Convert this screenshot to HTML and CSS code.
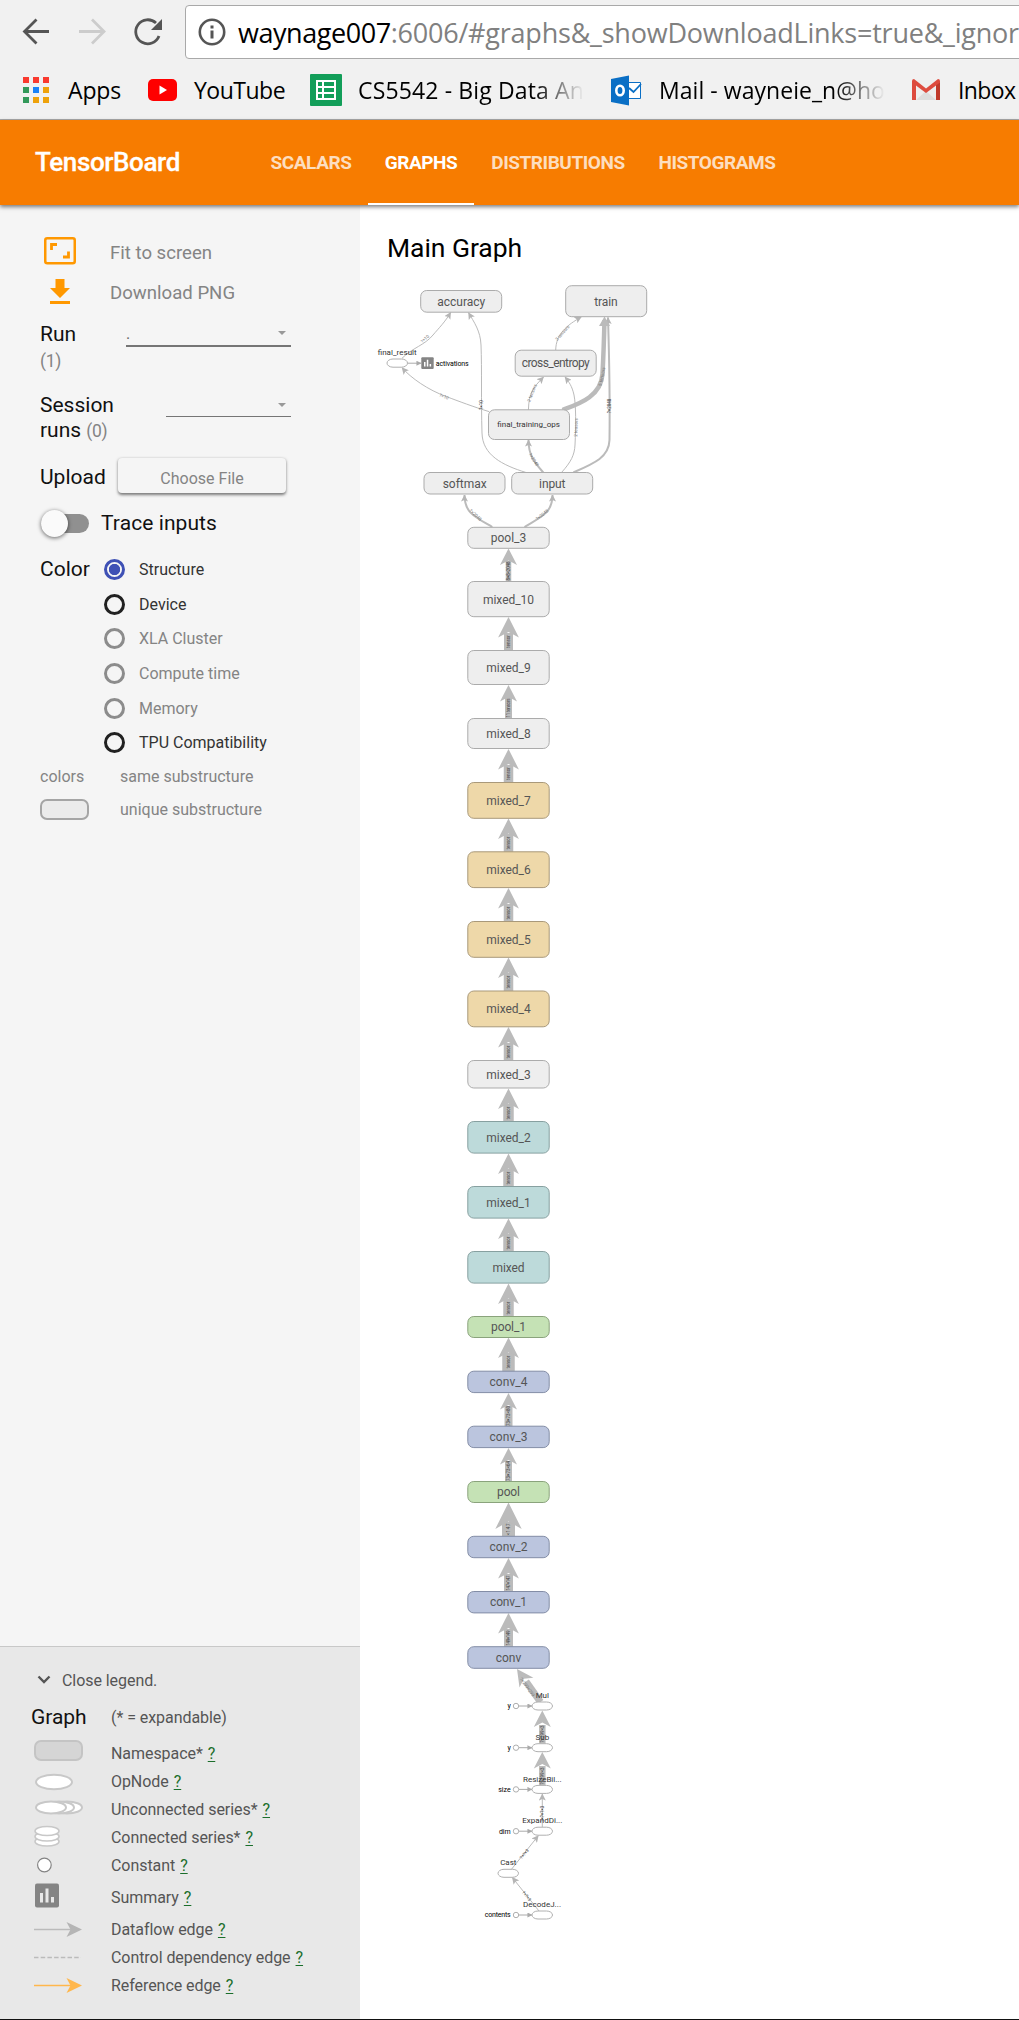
FILE: index.html
```html
<!DOCTYPE html>
<html lang="en">
<head>
<meta charset="utf-8">
<title>TensorBoard</title>
<link rel="stylesheet" href="styles.css">
</head>
<body>
<header class="browser">
  <div class="toolbar">
    <svg class="nav-icons" width="185" height="64" viewBox="0 0 185 64" fill="none" stroke-width="2.8">
      <path d="M49 31.500H25M36.500 19.500L24.500 31.500L36.500 43.500" stroke="#555"/>
      <path d="M79 31.500H103M92 19.500L104 31.500L92 43.500" stroke="#ccc"/>
      <path d="M159 36A12 12 0 1 1 156 23" stroke="#555"/>
      <path d="M162 19V30H151Z" fill="#555"/>
    </svg>
    <div class="omnibox">
      <svg width="28" height="28" viewBox="0 0 28 28"><circle cx="14" cy="14" r="12.200" fill="none" stroke="#555" stroke-width="2.600"/><path d="M12.500 7.500h3v3h-3zM12.500 12.500h3v8h-3z" fill="#555"/></svg>
      <span class="url"><span class="host">waynage007</span><span class="rest">:6006/#graphs&amp;_showDownloadLinks=true&amp;_ignor</span></span>
    </div>
  </div>
  <nav class="bookmarks">
    <a class="bm bm-apps"><svg width="26" height="26" viewBox="0 0 26 26"><path d="M0 0h6v6H0zM10 0h6v6h-6zM20 0h6v6h-6z" fill="#f93a2f"/><path d="M0 10h6v6H0zM0 20h6v6H0z" fill="#33995a"/><path d="M10 10h6v6h-6z" fill="#1a82f7"/><path d="M20 10h6v6h-6zM10 20h6v6h-6zM20 20h6v6h-6z" fill="#eea20b"/></svg><span>Apps</span></a>
    <a class="bm bm-yt"><svg width="29" height="22" viewBox="0 0 29 22"><rect width="29" height="22" rx="5" fill="#f00"/><path d="M11.500 6.500V15.500L19 11Z" fill="#fff"/></svg><span>YouTube</span></a>
    <a class="bm bm-cs"><svg width="32" height="32" viewBox="0 0 32 32"><rect width="32" height="32" rx="1" fill="#129e59"/><path d="M6 6h20v20H6z" fill="#fff"/><path d="M8 8h4v4H8zM14 8h10v4H14zM8 14h4v4H8zM14 14h10v4H14zM8 20h4v4H8zM14 20h10v4H14z" fill="#129e59"/></svg><span class="fade">CS5542 - Big Data An</span></a>
    <a class="bm bm-mail"><svg width="31" height="31" viewBox="0 0 31 31"><path d="M17 7.500H29.500V23.500H17" fill="#fff" stroke="#0a6fc5"/><path d="M18 13l4.500 4L30 9" fill="none" stroke="#0a6fc5" stroke-width="1.800"/><path d="M0 4L18 0.500V30.500L0 27Z" fill="#0a6fc5"/><ellipse cx="9" cy="15.500" rx="3.700" ry="4.800" fill="none" stroke="#fff" stroke-width="2.600"/></svg><span class="fade">Mail - wayneie_n@ho</span></a>
    <a class="bm bm-gm"><svg width="28" height="22" viewBox="0 0 28 22"><path d="M2 1H26V21H2Z" fill="#eee"/><path d="M4 21L14 12L24 21Z" fill="#ddd"/><path d="M0 21V2Q0 0 2 0L14 9.500L26 0Q28 0 28 2V21H24V6.500L14 14L4 6.500V21Z" fill="#dd4b3e"/><path d="M24 6.500L28 3.500V21H24Z" fill="#c03a2b"/></svg><span>Inbox</span></a>
  </nav>
</header>
<div class="appbar">
  <h1>TensorBoard</h1>
  <nav class="tabs"><a class="t-scalars">SCALARS</a><a class="t-graphs active">GRAPHS</a><a class="t-dist">DISTRIBUTIONS</a><a class="t-hist">HISTOGRAMS</a></nav>
</div>
<div class="main">
  <aside class="sidebar">
    <div class="action"><svg width="32" height="28" viewBox="0 0 32 28" fill="none" stroke="#ff9800"><rect x="1.250" y="1.250" width="29.500" height="25" rx="2" stroke-width="2.500"/><path d="M7.500 13V7.500H13M24.500 14.500V20H19" stroke-width="2.800"/></svg><span>Fit to screen</span></div>
    <div class="action"><svg width="32" height="28" viewBox="0 0 32 28" fill="#ff9800"><path d="M11.500 2H20.500V11H26L16 21L6 11H11.500ZM6 24H26V27H6Z"/></svg><span>Download PNG</span></div>
    <div class="field run"><div class="label">Run<br><small>(1)</small></div><div class="select sel-run"><span>.</span><i></i></div></div>
    <div class="field session"><div class="label">Session<br>runs <small>(0)</small></div><div class="select sel-session"><span></span><i></i></div></div>
    <div class="upload"><span class="label">Upload</span><button>Choose File</button></div>
    <div class="trace"><div class="toggle"></div><span class="label">Trace inputs</span></div>
    <div class="color"><span class="label">Color</span>
      <ul>
        <li class="on"><b></b><span>Structure</span></li>
        <li><b></b><span>Device</span></li>
        <li class="off"><b></b><span>XLA Cluster</span></li>
        <li class="off"><b></b><span>Compute time</span></li>
        <li class="off"><b></b><span>Memory</span></li>
        <li><b></b><span>TPU Compatibility</span></li>
      </ul>
    </div>
    <div class="subst"><div>colors</div><span>same substructure</span></div>
    <div class="subst second"><div><i></i></div><span>unique substructure</span></div>
    <section class="legend">
      <div class="close"><svg width="14" height="10" viewBox="0 0 14 10"><path d="M1.500 1.500L7 7L12.500 1.500" fill="none" stroke="#555" stroke-width="2.400"/></svg><span>Close legend.</span></div>
      <div class="head"><strong>Graph</strong><span>(* = expandable)</span></div>
      <div class="item ns"><svg width="50" height="28" viewBox="0 0 50 28"><rect x="1" y="2" width="47" height="19" rx="6" fill="#d5d5d5" stroke="#c4c4c4" stroke-width="2"/></svg><span>Namespace*</span><a>?</a></div>
      <div class="item"><svg width="50" height="28" viewBox="0 0 50 28"><ellipse cx="20" cy="15" rx="18" ry="7.200" fill="#fff" stroke="#c8c8c8" stroke-width="2"/></svg><span>OpNode</span><a>?</a></div>
      <div class="item"><svg width="50" height="28" viewBox="0 0 50 28" fill="#fff" stroke="#c8c8c8" stroke-width="2"><ellipse cx="33" cy="12.500" rx="15" ry="6"/><ellipse cx="25" cy="12.500" rx="15" ry="6"/><ellipse cx="17" cy="12.500" rx="15" ry="6"/></svg><span>Unconnected series*</span><a>?</a></div>
      <div class="item"><svg width="50" height="28" viewBox="0 0 50 28" fill="#fff" stroke="#c8c8c8" stroke-width="1.500"><ellipse cx="13" cy="18.500" rx="12" ry="4.600"/><ellipse cx="13" cy="13.500" rx="12" ry="4.600"/><ellipse cx="13" cy="8" rx="12" ry="4.600"/></svg><span>Connected series*</span><a>?</a></div>
      <div class="item"><svg width="50" height="28" viewBox="0 0 50 28"><circle cx="10.400" cy="14" r="6.800" fill="#fff" stroke="#848484" stroke-width="1.200"/></svg><span>Constant</span><a>?</a></div>
      <div class="item sum"><svg width="50" height="28" viewBox="0 0 50 28"><rect x="1" y="0.500" width="24" height="24" rx="2" fill="#848484"/><path d="M6 10h3v9.500H6zM11.500 5.500h3v14h-3zM17 14h3v5.500h-3z" fill="#e8e8e8"/></svg><span>Summary</span><a>?</a></div>
      <div class="item"><svg width="50" height="28" viewBox="0 0 50 28"><path d="M0 14.500H40" stroke="#bbb" stroke-width="1.400"/><path d="M48 14.500L32.500 7L36.500 14.500L32.500 22Z" fill="#b5b5b5"/></svg><span>Dataflow edge</span><a>?</a></div>
      <div class="item"><svg width="50" height="28" viewBox="0 0 50 28"><path d="M0 14.500H47" stroke="#bbb" stroke-width="1.400" stroke-dasharray="4.500 2.200"/></svg><span>Control dependency edge</span><a>?</a></div>
      <div class="item"><svg width="50" height="28" viewBox="0 0 50 28"><path d="M0 14.500H40" stroke="#ffb74d" stroke-width="1.600"/><path d="M48 14.500L32.500 7L36.500 14.500L32.500 22Z" fill="#ffb74d"/></svg><span>Reference edge</span><a>?</a></div>
    </section>
  </aside>
  <main class="canvas">
    <h2>Main Graph</h2>
    <svg class="graph" width="659" height="1739" viewBox="360 280 659 1739">
      <defs>
        <g id="head-s"><path d="M0 0L8.500 16.500L0 12L-8.500 16.500Z"/></g>
        <g id="head-m"><path d="M0 0L10.400 20.500L0 15L-10.400 20.500Z"/></g>
        <g id="head-l"><path d="M0 0L13.200 26.500L0 19L-13.200 26.500Z"/></g>
        <marker id="tip" viewBox="0 0 7 7" refX="6.500" refY="3.500" markerWidth="7" markerHeight="7" markerUnits="userSpaceOnUse" orient="auto"><path d="M0 0L7 3.500L0 7L1.500 3.500Z" fill="#b5b5b5"/></marker>
        <marker id="dot" viewBox="0 0 6 6" refX="5.500" refY="3" markerWidth="5" markerHeight="5" markerUnits="userSpaceOnUse" orient="auto"><path d="M0 0L6 3L0 6Z" fill="#aaa"/></marker>
      </defs>
      <g class="thin">
        <path d="M402 358.300C412 348 425 345 433 335C439 328 445 322 450.700 312.500"/>
        <path d="M526 472.500C502 465 482.500 455 482 433C481 400 482 370 481 345C480.500 331 474 322 468.500 312.700"/>
        <path d="M489.300 411.700C474 407 458 401 446.700 396.700C428 390 411 378 402 367.700"/>
        <path d="M555.700 350C556 334 567 325 581.300 317"/>
        <path d="M528.400 410C529 392 533 388 543.500 377"/>
        <path d="M561.500 472.500C571 462 574.500 455 575 445C576 425 576 405 574 395C572 386 569 382 565 377"/>
      </g>
      <g class="mid">
        <path d="M573.300 472.500C595 463 609 457 609.500 440C610 400 609 350 608 317.500"/>
        <path d="M543.300 472.500C535 463 528.500 456 528.500 440"/>
        <path d="M492.300 527C475 517 464.500 513 464.500 495"/>
        <path d="M524.500 527C541 517 552.500 513 552.500 495"/>
      </g>
      <path class="fat" d="M562.500 410C578 404 601 397 602.500 374C603.500 355 604 340 604.500 320"/><path d="M604.500 316.500L610 326H599Z" fill="#bbb"/>
      <path class="link" d="M407.500 363.200H421"/>
      <g class="stem">
        <path d="M508.500 561V582" stroke-width="5.500"/><path d="M508.500 633V651" stroke-width="9"/><path d="M508.500 697V719" stroke-width="7"/><path d="M508.500 765V783" stroke-width="9.500"/><path d="M508.500 834V852" stroke-width="9.500"/><path d="M508.500 904V922" stroke-width="9.500"/><path d="M508.500 973V991" stroke-width="9.500"/><path d="M508.500 1043V1061" stroke-width="9.500"/><path d="M508.500 1104V1122" stroke-width="10.500"/><path d="M508.500 1169V1187" stroke-width="10.500"/><path d="M508.500 1234V1252" stroke-width="10.500"/><path d="M508.500 1299V1317" stroke-width="10.500"/><path d="M508.500 1353V1372" stroke-width="12.500"/><path d="M508.500 1406V1427" stroke-width="8"/><path d="M508.500 1461V1482" stroke-width="7"/><path d="M508.500 1522V1537" stroke-width="13"/><path d="M508.500 1574V1592" stroke-width="9"/><path d="M508.500 1629V1647" stroke-width="9"/>
        <path d="M542.300 1725V1743.500M542.300 1766V1785" stroke-width="6.500"/><path d="M526 1681.500L540.500 1702" stroke-width="7"/>
      </g>
      <g fill="#bbb">
        <use href="#head-s" x="508.500" y="548.500"/><use href="#head-m" x="508.500" y="617"/><use href="#head-s" x="508.500" y="685"/><use href="#head-m" x="508.500" y="749"/><use href="#head-m" x="508.500" y="818.500"/><use href="#head-m" x="508.500" y="888"/><use href="#head-m" x="508.500" y="957.500"/><use href="#head-m" x="508.500" y="1027"/><use href="#head-m" x="508.500" y="1088.500"/><use href="#head-m" x="508.500" y="1153.500"/><use href="#head-m" x="508.500" y="1218.500"/><use href="#head-m" x="508.500" y="1283.500"/><use href="#head-m" x="508.500" y="1337.500"/><use href="#head-s" x="508.500" y="1393"/><use href="#head-s" x="508.500" y="1448"/><use href="#head-l" x="508.500" y="1502.500"/><use href="#head-m" x="508.500" y="1558"/><use href="#head-m" x="508.500" y="1613"/>
        <use href="#head-s" x="542.300" y="1710.500"/><use href="#head-s" x="542.300" y="1752"/><use href="#head-s" transform="translate(517 1669) rotate(-35)"/>
      </g>
      <g class="thin"><path d="M542.300 1827V1794"/><path d="M511.700 1869L538.300 1835.700"/><path d="M539 1911L512.300 1877.500"/></g>
      <g class="link"><path d="M519 1706H532"/><path d="M519 1747.700H532"/><path d="M519 1789.400H532"/><path d="M519 1831.200H532"/><path d="M519 1915H532"/></g>
      <g class="node">
        <rect x="420.700" y="290.500" width="81" height="21.700" rx="6"/><rect x="565.700" y="285.700" width="81" height="31" rx="6"/><rect x="515.200" y="350.200" width="81" height="26" rx="6"/><rect x="488.500" y="409.800" width="81" height="29.700" rx="6"/><rect x="424" y="472.500" width="81" height="21.500" rx="6"/><rect x="511.700" y="472.500" width="81" height="21.500" rx="6"/>
        <rect x="467.800" y="527.300" width="81.400" height="21" rx="6"/><rect x="467.800" y="581.500" width="81.400" height="35.200" rx="6"/><rect x="467.800" y="650.500" width="81.400" height="34" rx="6"/><rect x="467.800" y="718.500" width="81.400" height="30" rx="6"/><rect x="467.800" y="1060.500" width="81.400" height="27.500" rx="6"/>
      </g>
      <g class="node sand"><rect x="467.800" y="782.500" width="81.400" height="35.800" rx="6"/><rect x="467.800" y="851.800" width="81.400" height="35.800" rx="6"/><rect x="467.800" y="921.500" width="81.400" height="35.800" rx="6"/><rect x="467.800" y="991" width="81.400" height="35.800" rx="6"/></g>
      <g class="node teal"><rect x="467.800" y="1121.500" width="81.400" height="31.600" rx="6"/><rect x="467.800" y="1186.500" width="81.400" height="31.600" rx="6"/><rect x="467.800" y="1251.500" width="81.400" height="31.600" rx="6"/></g>
      <g class="node green"><rect x="467.800" y="1316.500" width="81.400" height="21" rx="6"/><rect x="467.800" y="1481.500" width="81.400" height="21" rx="6"/></g>
      <g class="node blue"><rect x="467.800" y="1371.200" width="81.400" height="21.400" rx="6"/><rect x="467.800" y="1426.200" width="81.400" height="21.400" rx="6"/><rect x="467.800" y="1536.300" width="81.400" height="21.400" rx="6"/><rect x="467.800" y="1591.500" width="81.400" height="21.400" rx="6"/><rect x="467.800" y="1646.700" width="81.400" height="21.600" rx="6"/></g>
      <g class="op"><rect x="387" y="359" width="20.500" height="8.200" rx="6"/><rect x="532" y="1702" width="20.500" height="8" rx="6"/><rect x="532" y="1743.700" width="20.500" height="8" rx="6"/><rect x="532" y="1785.400" width="20.500" height="8" rx="6"/><rect x="532" y="1827.200" width="20.500" height="8" rx="6"/><rect x="498" y="1869.300" width="20.500" height="8" rx="6"/><rect x="532" y="1911" width="20.500" height="8" rx="6"/>
        <circle cx="516" cy="1706" r="2.700"/><circle cx="516" cy="1747.700" r="2.700"/><circle cx="516" cy="1789.400" r="2.700"/><circle cx="516" cy="1831.200" r="2.700"/><circle cx="516" cy="1915" r="2.700"/></g>
      <rect x="421.300" y="357.300" width="12.400" height="11.800" rx="1" fill="#848484"/><path d="M424 362h1.500v4.500H424zM426.800 359.800h1.500v6.700h-1.500zM429.600 364h1.500v2.500h-1.500z" fill="#fff"/>
      <g class="name">
        <text x="461.200" y="305.500" textLength="48">accuracy</text><text x="606" y="305.500" textLength="23.500">train</text><text x="555.800" y="367" textLength="68">cross_entropy</text><text x="464.700" y="487.500" textLength="44">softmax</text><text x="552.300" y="487.500" textLength="26.500">input</text>
        <text x="508.500" y="542" textLength="35.500">pool_3</text><text x="508.500" y="604" textLength="51">mixed_10</text><text x="508.500" y="672" textLength="44.500">mixed_9</text><text x="508.500" y="738" textLength="44.500">mixed_8</text><text x="508.500" y="805" textLength="44.500">mixed_7</text><text x="508.500" y="874" textLength="44.500">mixed_6</text><text x="508.500" y="944" textLength="44.500">mixed_5</text><text x="508.500" y="1013" textLength="44.500">mixed_4</text><text x="508.500" y="1079" textLength="44.500">mixed_3</text><text x="508.500" y="1142" textLength="44.500">mixed_2</text><text x="508.500" y="1207" textLength="44.500">mixed_1</text><text x="508.500" y="1272" textLength="32">mixed</text><text x="508.500" y="1331" textLength="35">pool_1</text><text x="508.500" y="1386" textLength="38">conv_4</text><text x="508.500" y="1441" textLength="38">conv_3</text><text x="508.500" y="1496" textLength="23">pool</text><text x="508.500" y="1551" textLength="38">conv_2</text><text x="508.500" y="1606" textLength="37">conv_1</text><text x="508.500" y="1662" textLength="25.500">conv</text>
      </g>
      <g class="opname"><text x="528.600" y="427" textLength="62.500">final_training_ops</text><text x="397.200" y="354.500" textLength="39">final_result</text><text x="542.300" y="1698.300">Mul</text><text x="542.300" y="1740.300">Sub</text><text x="542.300" y="1782.300" textLength="38.500">ResizeBil...</text><text x="542.300" y="1823.300" textLength="40">ExpandDi...</text><text x="508.300" y="1865.300">Cast</text><text x="542" y="1907.300" textLength="38">DecodeJ...</text></g>
      <g class="tiny"><text x="435.700" y="366" textLength="33" class="start">activations</text><text x="510.700" y="1708">y</text><text x="510.700" y="1750">y</text><text x="510.700" y="1791.500">size</text><text x="510.700" y="1833.500">dim</text><text x="510.700" y="1917" textLength="26">contents</text></g>
      <g class="edge">
        <text transform="translate(426 340) rotate(-43)">?×10</text><text transform="translate(443.500 398) rotate(22)">?×10</text><text transform="translate(483 405) rotate(-90)" class="dark">?×10</text><text transform="translate(563.500 334) rotate(-48)">3 tensors</text><text transform="translate(533.500 393.500) rotate(-68)">2 tensors</text><text transform="translate(577.500 427.500) rotate(-88)">2 tensors</text><text transform="translate(603.500 377) rotate(-78)">5 tensors</text><text transform="translate(611.300 406) rotate(-90)" class="dark">?×2048</text><text transform="translate(532.500 460.500) rotate(58)">?×2048</text><text transform="translate(474.500 516) rotate(42)">?×2048</text><text transform="translate(543 516) rotate(-38)">?×2048</text>
        <text transform="translate(526 1688) rotate(54)">?×299×299</text><text transform="translate(544.300 1734) rotate(-90)" class="dark">?×299×3</text><text transform="translate(544.300 1776) rotate(-90)" class="dark">?×299×3</text><text transform="translate(544.300 1814) rotate(-90)" class="dark">1×?×?×3</text><text transform="translate(525.500 1855) rotate(-51)" class="dark">?×?×3</text><text transform="translate(525.500 1897) rotate(51)" class="dark">?×?×3</text>
        <g class="dark"><text transform="translate(510.300 571) rotate(-90)" textLength="19">8×8×2048</text><text transform="translate(510.300 641.500) rotate(-90)">tensor</text><text transform="translate(510.300 708) rotate(-90)" textLength="19">11 tensors</text><text transform="translate(510.300 773.500) rotate(-90)">tensor</text><text transform="translate(510.300 843) rotate(-90)">tensor</text><text transform="translate(510.300 913) rotate(-90)">tensor</text><text transform="translate(510.300 982) rotate(-90)">tensor</text><text transform="translate(510.300 1052) rotate(-90)">tensor</text><text transform="translate(510.300 1113) rotate(-90)">tensor</text><text transform="translate(510.300 1178) rotate(-90)">tensor</text><text transform="translate(510.300 1243) rotate(-90)">tensor</text><text transform="translate(510.300 1308) rotate(-90)">tensor</text><text transform="translate(510.300 1362) rotate(-90)">tensor</text><text transform="translate(510.300 1416) rotate(-90)" textLength="20">73×73×80</text><text transform="translate(510.300 1471) rotate(-90)" textLength="20">73×73×64</text><text transform="translate(510.300 1529.500) rotate(-90)" textLength="12">×147</text><text transform="translate(510.300 1583) rotate(-90)" textLength="15">147×147</text><text transform="translate(510.300 1638) rotate(-90)" textLength="15">149×149</text></g>
      </g>
    </svg>
  </main>
</div>
<div class="taskbar"></div>
</body>
</html>
```
FILE: styles.css
```css
* { box-sizing: border-box; }
body { margin: 0; width: 1019px; height: 2020px; overflow: hidden; background: #fff; font-family: Roboto, sans-serif; color: #111; display: flex; flex-direction: column; }
svg { flex: none; display: block; }

.browser { flex: none; height: 120px; background: #f1f1f1; border-bottom: 1px solid #a9a9a9; font-family: "Open Sans", "Noto Sans", sans-serif; color: #000; overflow: hidden; }
.toolbar { display: flex; height: 64px; }
.omnibox { flex: none; width: 900px; margin-top: 5px; height: 54px; border: 1px solid #a9a9a9; border-radius: 4px; background: #fff; display: flex; align-items: center; padding-left: 12px; }
.url { font-size: 27px; margin-left: 12px; white-space: nowrap; color: #808080; letter-spacing: -0.220px; }
.url .host { color: #000; letter-spacing: -0.450px; }
.bookmarks { display: flex; height: 52px; }
.bm { flex: none; display: flex; align-items: center; font-size: 23px; white-space: nowrap; }
.bm-apps { width: 125px; padding-left: 23px; gap: 19px; letter-spacing: -0.150px; }
.bm-yt { width: 162px; padding-left: 23px; gap: 17px; letter-spacing: -0.500px; }
.bm-cs { width: 301px; padding-left: 23px; gap: 16px; letter-spacing: 0.140px; }
.bm-mail { width: 301px; padding-left: 23px; gap: 17px; letter-spacing: 0.050px; }
.bm-gm { padding-left: 23px; gap: 18px; letter-spacing: -0.600px; }
.fade { -webkit-mask-image: linear-gradient(90deg, #000 78%, transparent); mask-image: linear-gradient(90deg, #000 78%, transparent); }

.appbar { flex: none; position: relative; z-index: 1; height: 85px; background: #f77c00; color: #fff; display: flex; box-shadow: 0 2px 4px rgba(0,0,0,.5); }
.appbar h1 { margin: 0; padding-left: 35px; width: 254px; font-size: 26px; line-height: 85px; font-weight: 500; letter-spacing: -0.380px; -webkit-text-stroke: 0.300px #fff; }
.tabs { display: flex; }
.tabs a { text-align: center; white-space: nowrap; font-size: 19px; line-height: 85px; font-weight: 700; letter-spacing: -0.450px; color: rgba(255,255,255,.75); }
.tabs .active { color: #fff; border-bottom: 2px solid #fff; }
.t-scalars { width: 114px; }
.t-graphs { width: 106px; }
.t-dist { width: 168px; }
.t-hist { width: 150px; }

.main { flex: none; height: 1814px; display: flex; }
.sidebar { flex: none; width: 360px; background: #f5f5f5; display: flex; flex-direction: column; padding-top: 28px; font-size: 21px; }
.label { color: #111; }
.action { display: flex; align-items: center; height: 40px; padding-left: 44px; gap: 34px; font-size: 18.600px; color: #848484; }
.action svg { margin-bottom: 4px; }
.field { display: flex; padding-left: 40px; }
.field small { font-size: 17.500px; color: #848484; letter-spacing: -0.300px; }
.run { height: 80px; padding-top: 8px; line-height: 26px; }
.run .label { width: 86px; }
.session { height: 49px; line-height: 25px; }
.session .label { width: 126px; }
.select { display: flex; justify-content: space-between; height: 26px; border-bottom: 2px solid #757575; font-size: 16px; color: #666; }
.select i { border: 4.500px solid transparent; border-top-color: #999; border-bottom: 0; height: 4px; margin: 10px 5px 0 0; }
.sel-run { width: 165px; }
.sel-session { width: 125px; height: 24px; border-bottom-width: 1px; }
.upload { display: flex; align-items: center; height: 70px; padding-left: 40px; }
.upload .label { width: 78px; }
.upload button { width: 168px; height: 35px; margin: 0 0 3px; padding: 5px 0 0; border: 0; border-radius: 4px; background: #f5f5f5; box-shadow: 0 1.500px 3px rgba(0,0,0,.5); font: 16px Roboto, sans-serif; color: #848484; }
.trace { display: flex; align-items: center; height: 22px; padding-left: 41px; gap: 12px; letter-spacing: 0.080px; }
.toggle { position: relative; width: 48px; height: 19px; border-radius: 10px; background: #909090; }
.toggle::before { content: ""; position: absolute; left: 0; top: -4px; width: 27px; height: 27px; border-radius: 50%; background: #fafafa; box-shadow: 0 1px 4px rgba(0,0,0,.6); }
.color { display: flex; margin-top: 18.500px; padding-left: 40px; }
.color .label { width: 64px; line-height: 33px; }
.color ul { list-style: none; margin: 0; padding: 0; font-size: 16px; color: #333; }
.color li { display: flex; align-items: center; height: 34.600px; gap: 14px; }
.color b { width: 21px; height: 21px; border: 3px solid #212121; border-radius: 50%; }
.color .on b { border-color: #3f51b5; background: radial-gradient(circle, #3f51b5 5.300px, #f5f5f5 6px); }
.color .off { color: #848484; }
.color .off b { border-color: #8c8c8c; }
.subst { display: flex; align-items: center; height: 33.500px; padding-left: 40px; font-size: 16px; color: #848484; }
.subst div { width: 80px; }
.subst.second { height: 31px; }
.subst i { display: block; width: 49px; height: 21px; border: 2px solid #a5a5a5; border-radius: 7px; background: #ebebeb; }

.legend { margin-top: auto; height: 373px; border-top: 1px solid #c8c8c8; background: #e8e8e8; font-size: 16px; letter-spacing: -0.060px; color: #555; }
.close { display: flex; align-items: center; height: 34px; margin-top: 16px; padding-left: 37px; gap: 11px; }
.head { display: flex; align-items: center; height: 40px; padding-left: 31px; }
.head strong { width: 80px; font-size: 21px; font-weight: 400; color: #111; }
.item { display: flex; align-items: center; height: 28px; padding-left: 34px; }
.item span { margin-left: 27px; }
.item a { margin-left: 5px; color: #1b6e2b; text-decoration: underline; text-underline-offset: 2px; }
.ns { margin-top: 2px; }
.sum { height: 36px; }

.canvas { width: 659px; }
.canvas h2 { margin: 0; height: 75px; padding: 20px 0 0 27px; font-size: 26.500px; line-height: 46px; font-weight: 400; color: #000; letter-spacing: -0.050px; }
.graph { font-family: Roboto, sans-serif; }
.thin path, .mid path, .fat { fill: none; stroke: #bbb; stroke-width: 1; marker-end: url(#tip); }
.mid path { stroke-width: 2; }
.fat { stroke-width: 4.500; marker-end: none; }
.link { fill: none; stroke: #aaa; stroke-width: 1; marker-end: url(#dot); }
g.link { marker-end: none; }
g.link path { marker-end: url(#dot); }
.stem path { stroke: #bbb; }
.node rect { fill: #eee; stroke: #ababab; stroke-width: 1; }
.sand rect { fill: #eed8a9; stroke: #a9997a; }
.teal rect { fill: #bddada; stroke: #87a0a0; }
.green rect { fill: #c5e2b5; stroke: #8aa37c; }
.blue rect { fill: #bbc5de; stroke: #838da6; }
.op rect, .op circle { fill: #fff; stroke: #b0b0b0; stroke-width: 1; }
.name { font-size: 12px; fill: #555; text-anchor: middle; }
.opname { font-size: 8px; fill: #333; text-anchor: middle; }
.tiny { font-size: 7px; fill: #000; text-anchor: end; }
.tiny .start { text-anchor: start; }
.edge { font-size: 4.500px; fill: #777; text-anchor: middle; }
.edge .dark { fill: #444; }

.taskbar { flex: none; height: 1px; background: #111; }
```
